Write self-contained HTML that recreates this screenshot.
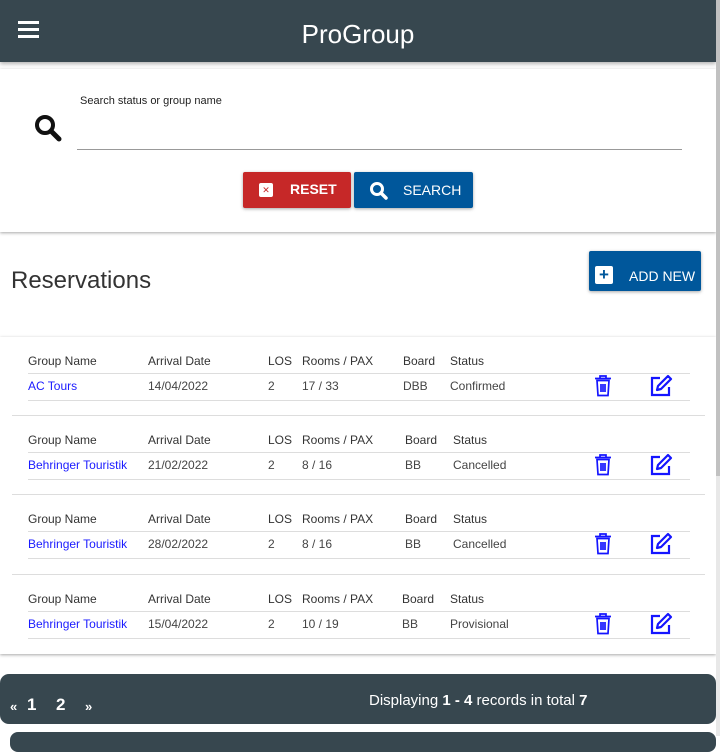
<!DOCTYPE html>
<html><head><style>
*{box-sizing:border-box;margin:0;padding:0}
body{width:720px;height:736px;overflow:hidden;background:#fff;font-family:"Liberation Sans",sans-serif;position:relative}
.hdr{position:absolute;left:0;top:0;width:716px;height:62px;background:#37474f;box-shadow:0 2px 4px rgba(0,0,0,.3)}
.hdr .t{position:absolute;left:0;width:716px;top:19px;text-align:center;color:#fff;font-size:26px}
.burger{position:absolute;left:18px;top:21px;width:21px}
.burger i{display:block;height:3px;background:#fff;margin-bottom:4px}
.card1{position:absolute;left:0;top:69px;width:716px;height:163px;background:#fff;box-shadow:0 1px 3px rgba(0,0,0,.35)}
.lbl{position:absolute;left:80px;top:95px;font-size:11px;color:#222}
.inp{position:absolute;left:77px;top:149px;width:605px;border-top:1px solid #999}
.btn{position:absolute;top:172px;height:36px;color:#fff;font-size:14px;box-shadow:0 1px 3px rgba(0,0,0,.35);border-radius:2px}
.res{position:absolute;left:11px;top:267px;font-size:24px;color:#333}
.add{position:absolute;left:589px;top:251px;width:112px;height:40px;background:#00579b;color:#fff;font-size:14px;border-radius:2px;box-shadow:0 1px 3px rgba(0,0,0,.35)}
.card2{position:absolute;left:0;top:337px;width:716px;height:317px;background:#fff;box-shadow:0 1px 3px rgba(0,0,0,.35)}
.g{position:absolute;left:0;width:716px;height:79px;font-size:12px}
.g span{position:absolute}
.h{color:#333;top:17px}
.d{color:#444;top:42px}
.ln{position:absolute;left:28px;width:662px;border-top:1px solid #ddd}
.sep{position:absolute;left:12px;width:693px;border-top:1px solid #ddd;top:78px}
.a{color:#1a1aff}
.ic{position:absolute;top:37px}
.pg{position:absolute;left:0;top:674px;width:716px;height:50px;background:#37474f;border-radius:9px;color:#fff}
.pg2{position:absolute;left:10px;top:732px;width:706px;height:20px;background:#37474f;border-radius:8px}
.sb{position:absolute;left:716px;top:0;width:4px;height:736px;background:#e8e8e8}
.sb i{position:absolute;left:0;top:0;width:4px;height:476px;background:#c1c1c1}
</style></head><body>
<div class="hdr"><div class="burger"><i></i><i></i><i></i></div><div class="t">ProGroup</div></div>
<div class="card1"></div>
<svg style="position:absolute;left:34px;top:114px" width="30" height="28" viewBox="0 0 30 28"><circle cx="11" cy="11" r="8" fill="none" stroke="#111" stroke-width="4"/><path d="M17 17l8 8" stroke="#111" stroke-width="5" stroke-linecap="round"/></svg>
<div class="lbl">Search status or group name</div>
<div class="inp"></div>
<div class="btn" style="left:243px;width:108px;background:#c62828"><span style="position:absolute;left:16px;top:11px;width:14px;height:14px;background:#fff;border-radius:2px;color:#c62828;font-size:9px;text-align:center;line-height:14px">✕</span><span style="position:absolute;left:47px;top:9px;font-weight:bold">RESET</span></div>
<div class="btn" style="left:354px;width:119px;background:#00579b"><svg style="position:absolute;left:15px;top:9px" width="20" height="20" viewBox="0 0 20 20"><circle cx="8" cy="8" r="5.5" fill="none" stroke="#fff" stroke-width="3"/><path d="M12 12l5 5" stroke="#fff" stroke-width="3.5" stroke-linecap="round"/></svg><span style="position:absolute;left:49px;top:10px">SEARCH</span></div>
<div class="res">Reservations</div>
<div class="add"><span style="position:absolute;left:6px;top:15px;width:18px;height:18px;background:#fff;border-radius:2px;color:#00579b;font-size:17px;font-weight:bold;text-align:center;line-height:18px">+</span><span style="position:absolute;left:40px;top:17px">ADD NEW</span></div>
<div class="card2"></div>
<div class="g" style="top:337px">
<span class="h" style="left:28px">Group Name</span><span class="h" style="left:148px">Arrival Date</span><span class="h" style="left:268px">LOS</span><span class="h" style="left:302px">Rooms / PAX</span><span class="h" style="left:403px">Board</span><span class="h" style="left:450px">Status</span>
<div class="ln" style="top:36px"></div>
<span class="d a" style="left:28px">AC Tours</span><span class="d" style="left:148px">14/04/2022</span><span class="d" style="left:268px">2</span><span class="d" style="left:302px">17 / 33</span><span class="d" style="left:403px">DBB</span><span class="d" style="left:450px">Confirmed</span>
<div class="ln" style="top:63px"></div><div class="sep"></div>
<svg class="ic" style="left:593px" width="20" height="24" viewBox="0 0 20 24"><path d="M2 4.5h16M7 4V2h6v2M4 6.5l1 15h10l1-15z M8 10v8M10 10v8M12 10v8" fill="none" stroke="#1515ff" stroke-width="1.7"/></svg>
<svg class="ic" style="left:649px" width="24" height="24" viewBox="0 0 24 24"><path d="M11 4H3v17h17v-8" fill="none" stroke="#1515ff" stroke-width="2.2"/><path d="M19 2l3 3-10 10-4 1 1-4z" fill="none" stroke="#1515ff" stroke-width="2.2" stroke-linejoin="round"/></svg>
</div>
<div class="g" style="top:416px">
<span class="h" style="left:28px">Group Name</span><span class="h" style="left:148px">Arrival Date</span><span class="h" style="left:268px">LOS</span><span class="h" style="left:302px">Rooms / PAX</span><span class="h" style="left:405px">Board</span><span class="h" style="left:453px">Status</span>
<div class="ln" style="top:36px"></div>
<span class="d a" style="left:28px">Behringer Touristik</span><span class="d" style="left:148px">21/02/2022</span><span class="d" style="left:268px">2</span><span class="d" style="left:302px">8 / 16</span><span class="d" style="left:405px">BB</span><span class="d" style="left:453px">Cancelled</span>
<div class="ln" style="top:63px"></div><div class="sep"></div>
<svg class="ic" style="left:593px" width="20" height="24" viewBox="0 0 20 24"><path d="M2 4.5h16M7 4V2h6v2M4 6.5l1 15h10l1-15z M8 10v8M10 10v8M12 10v8" fill="none" stroke="#1515ff" stroke-width="1.7"/></svg>
<svg class="ic" style="left:649px" width="24" height="24" viewBox="0 0 24 24"><path d="M11 4H3v17h17v-8" fill="none" stroke="#1515ff" stroke-width="2.2"/><path d="M19 2l3 3-10 10-4 1 1-4z" fill="none" stroke="#1515ff" stroke-width="2.2" stroke-linejoin="round"/></svg>
</div>
<div class="g" style="top:495px">
<span class="h" style="left:28px">Group Name</span><span class="h" style="left:148px">Arrival Date</span><span class="h" style="left:268px">LOS</span><span class="h" style="left:302px">Rooms / PAX</span><span class="h" style="left:405px">Board</span><span class="h" style="left:453px">Status</span>
<div class="ln" style="top:36px"></div>
<span class="d a" style="left:28px">Behringer Touristik</span><span class="d" style="left:148px">28/02/2022</span><span class="d" style="left:268px">2</span><span class="d" style="left:302px">8 / 16</span><span class="d" style="left:405px">BB</span><span class="d" style="left:453px">Cancelled</span>
<div class="ln" style="top:63px"></div><div class="sep" style="top:79px"></div>
<svg class="ic" style="left:593px" width="20" height="24" viewBox="0 0 20 24"><path d="M2 4.5h16M7 4V2h6v2M4 6.5l1 15h10l1-15z M8 10v8M10 10v8M12 10v8" fill="none" stroke="#1515ff" stroke-width="1.7"/></svg>
<svg class="ic" style="left:649px" width="24" height="24" viewBox="0 0 24 24"><path d="M11 4H3v17h17v-8" fill="none" stroke="#1515ff" stroke-width="2.2"/><path d="M19 2l3 3-10 10-4 1 1-4z" fill="none" stroke="#1515ff" stroke-width="2.2" stroke-linejoin="round"/></svg>
</div>
<div class="g" style="top:575px">
<span class="h" style="left:28px">Group Name</span><span class="h" style="left:148px">Arrival Date</span><span class="h" style="left:268px">LOS</span><span class="h" style="left:302px">Rooms / PAX</span><span class="h" style="left:402px">Board</span><span class="h" style="left:450px">Status</span>
<div class="ln" style="top:36px"></div>
<span class="d a" style="left:28px">Behringer Touristik</span><span class="d" style="left:148px">15/04/2022</span><span class="d" style="left:268px">2</span><span class="d" style="left:302px">10 / 19</span><span class="d" style="left:402px">BB</span><span class="d" style="left:450px">Provisional</span>
<div class="ln" style="top:63px"></div>
<svg class="ic" style="left:593px" width="20" height="24" viewBox="0 0 20 24"><path d="M2 4.5h16M7 4V2h6v2M4 6.5l1 15h10l1-15z M8 10v8M10 10v8M12 10v8" fill="none" stroke="#1515ff" stroke-width="1.7"/></svg>
<svg class="ic" style="left:649px" width="24" height="24" viewBox="0 0 24 24"><path d="M11 4H3v17h17v-8" fill="none" stroke="#1515ff" stroke-width="2.2"/><path d="M19 2l3 3-10 10-4 1 1-4z" fill="none" stroke="#1515ff" stroke-width="2.2" stroke-linejoin="round"/></svg>
</div>
<div class="pg">
<span style="position:absolute;left:10px;top:25px;font-size:13px;font-weight:bold">«</span>
<span style="position:absolute;left:27px;top:21px;font-size:17px;font-weight:bold">1</span>
<span style="position:absolute;left:56px;top:21px;font-size:17px;font-weight:bold">2</span>
<span style="position:absolute;left:85px;top:25px;font-size:13px;font-weight:bold">»</span>
<span style="position:absolute;left:369px;top:18px;font-size:15px">Displaying <b>1 - 4</b> records in total <b>7</b></span>
</div>
<div class="pg2"></div>
<div class="sb"><i></i></div>
</body></html>
